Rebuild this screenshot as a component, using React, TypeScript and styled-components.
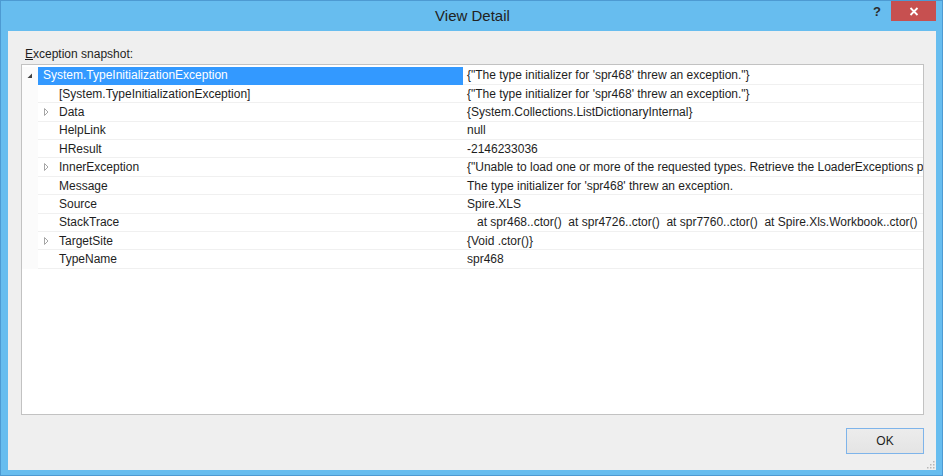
import React from 'react';
import styled, {createGlobalStyle} from 'styled-components';

interface IRow {
    name: string;
    value: string;
    level: number;
    expander?: 'open' | 'closed';
    selected?: boolean;
}

const gap = "\u00a0\u00a0";

const rows: Array<IRow> = [
    {name: "System.TypeInitializationException", value: "{\"The type initializer for 'spr468' threw an exception.\"}", level: 0, expander: 'open', selected: true},
    {name: "[System.TypeInitializationException]", value: "{\"The type initializer for 'spr468' threw an exception.\"}", level: 1},
    {name: "Data", value: "{System.Collections.ListDictionaryInternal}", level: 1, expander: 'closed'},
    {name: "HelpLink", value: "null", level: 1},
    {name: "HResult", value: "-2146233036", level: 1},
    {name: "InnerException", value: "{\"Unable to load one or more of the requested types. Retrieve the LoaderExceptions property for more information.\"}", level: 1, expander: 'closed'},
    {name: "Message", value: "The type initializer for 'spr468' threw an exception.", level: 1},
    {name: "Source", value: "Spire.XLS", level: 1},
    {name: "StackTrace", value: `   at spr468..ctor()${gap}at spr4726..ctor()${gap}at spr7760..ctor()${gap}at Spire.Xls.Workbook..ctor()`, level: 1},
    {name: "TargetSite", value: "{Void .ctor()}", level: 1, expander: 'closed'},
    {name: "TypeName", value: "spr468", level: 1},
];

const GlobalStyle = createGlobalStyle`
    html, body {
        margin: 0;
        padding: 0;
        background: #ffffff;
    }
    body {
        font-family: "Liberation Sans", Arial, sans-serif;
        color: #1e1e1e;
    }
`;

const Window = styled.div`
    box-sizing: border-box;
    width: 943px;
    height: 476px;
    display: flex;
    flex-direction: column;
    background: #67bdef;
    border: 1px solid #4d9ad2;
    overflow: hidden;
`;

const TitleBar = styled.div`
    height: 30px;
    display: flex;
    align-items: flex-start;
    position: relative;
    flex-shrink: 0;
`;

const Title = styled.div`
    flex: 1;
    text-align: center;
    font-size: 15px;
    line-height: 30px;
    color: #222222;
    padding-left: 2px;
`;

const TitleButtons = styled.div`
    position: absolute;
    right: 6px;
    top: 0;
    display: flex;
    align-items: flex-start;
`;

const HelpButton = styled.div`
    width: 26px;
    height: 21px;
    font-size: 13px;
    font-weight: bold;
    line-height: 22px;
    text-align: center;
    color: #2b2b2b;
    margin-right: 1px;
`;

const CloseButton = styled.div`
    width: 45px;
    height: 20px;
    background: #c75050;
    display: flex;
    align-items: center;
    justify-content: center;
`;

const Content = styled.div`
    flex: 1;
    margin: 0 6px 5px 7px;
    background: #efefef;
    display: flex;
    flex-direction: column;
    padding: 16px 12px 0 13px;
    position: relative;
`;

const Label = styled.div`
    font-size: 12px;
    line-height: 14px;
    padding-left: 4px;
    margin-bottom: 3px;
    color: #1e1e1e;
    u {
        text-decoration: underline;
    }
`;

const TreeBox = styled.div`
    box-sizing: border-box;
    height: 351px;
    background: #ffffff;
    border: 1px solid #c2c2c2;
    padding-top: 1.5px;
    overflow: hidden;
`;

const Row = styled.div`
    display: flex;
    height: 18.4px;
    font-size: 12px;
    white-space: nowrap;
`;

const Gutter = styled.div`
    width: 16px;
    flex-shrink: 0;
    display: flex;
    align-items: center;
    justify-content: center;
    background: #fbfbfb;
`;

const NameCell = styled.div<{$selected?: boolean; $level: number}>`
    box-sizing: border-box;
    width: 425px;
    flex-shrink: 0;
    display: flex;
    align-items: center;
    padding-left: ${p => p.$level > 0 ? (p.$level - 1) * 16 : 0}px;
    background: ${p => p.$selected ? '#3399ff' : 'transparent'};
    color: ${p => p.$selected ? '#ffffff' : '#1e1e1e'};
    border-bottom: 1px solid ${p => p.$selected ? '#3399ff' : '#f0f0f0'};
`;

const ExpanderSlot = styled.div`
    width: 16px;
    flex-shrink: 0;
    display: flex;
    align-items: center;
    justify-content: center;
`;

const NameText = styled.span`
    padding-left: 5px;
`;

const ValueCell = styled.div`
    flex: 1;
    min-width: 0;
    display: flex;
    align-items: center;
    padding-left: 4px;
    overflow: hidden;
    white-space: pre;
    border-bottom: 1px solid #f0f0f0;
    color: #1e1e1e;
`;

const Footer = styled.div`
    display: flex;
    justify-content: flex-end;
    padding-top: 13px;
`;

const OkButton = styled.div`
    box-sizing: border-box;
    width: 78px;
    height: 26px;
    border: 1px solid #7eb4ea;
    background: linear-gradient(#ececec, #e4e4e4);
    font-size: 12px;
    display: flex;
    align-items: center;
    justify-content: center;
    color: #1e1e1e;
`;

const Grip = styled.svg`
    position: absolute;
    right: 1px;
    bottom: 1px;
`;

const Expander: React.FC<{kind?: 'open' | 'closed'}> = ({kind}) => {
    if(kind === 'open') {
        return <svg width="6" height="6" viewBox="0 0 6 6"><path d="M5 0.5 L5 5 L0.5 5 Z" fill="#404040"/></svg>;
    }
    if(kind === 'closed') {
        return <svg width="6" height="8" viewBox="0 0 6 8"><path d="M1.5 0.5 L5 4 L1.5 7.5 Z" fill="none" stroke="#a6a6a6" strokeWidth="1"/></svg>;
    }
    return null;
}

const App: React.FC = () => {
    return (
        <>
            <GlobalStyle />
            <Window>
                <TitleBar>
                    <Title>View Detail</Title>
                    <TitleButtons>
                        <HelpButton>?</HelpButton>
                        <CloseButton>
                            <svg width="10" height="9" viewBox="0 0 10 9">
                                <path d="M1.5 1 L8.5 8 M8.5 1 L1.5 8" stroke="#ffffff" strokeWidth="1.8"/>
                            </svg>
                        </CloseButton>
                    </TitleButtons>
                </TitleBar>
                <Content>
                    <Label><u>E</u>xception snapshot:</Label>
                    <TreeBox>
                        {rows.map(row =>
                            <Row key={row.name}>
                                <Gutter>{row.level === 0 && <Expander kind={row.expander}/>}</Gutter>
                                <NameCell $selected={row.selected} $level={row.level}>
                                    {row.level > 0 && <ExpanderSlot><Expander kind={row.expander}/></ExpanderSlot>}
                                    <NameText>{row.name}</NameText>
                                </NameCell>
                                <ValueCell>{row.value}</ValueCell>
                            </Row>
                        )}
                    </TreeBox>
                    <Footer>
                        <OkButton>OK</OkButton>
                    </Footer>
                    <Grip width="10" height="10" viewBox="0 0 10 10">
                        {[[8, 2], [8, 5], [5, 5], [8, 8], [5, 8], [2, 8]].map(([x, y]) =>
                            <rect key={`${x}-${y}`} x={x} y={y} width="1.5" height="1.5" fill="#b8b8b8"/>
                        )}
                    </Grip>
                </Content>
            </Window>
        </>
    );
}

export default App;
